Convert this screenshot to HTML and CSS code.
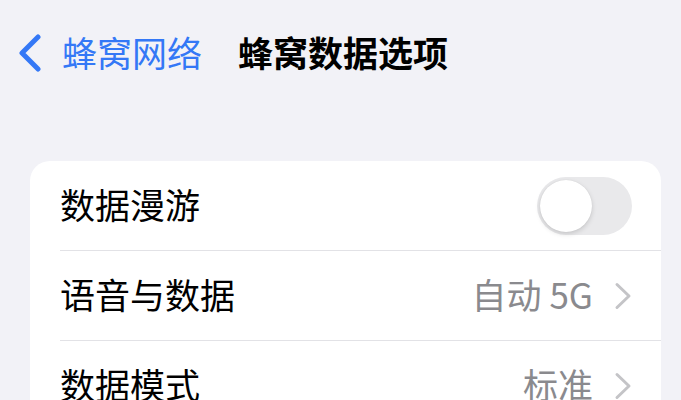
FILE: index.html
```html
<!DOCTYPE html>
<html lang="zh-CN">
<head>
<meta charset="utf-8">
<link rel="stylesheet" href="styles.css">
</head>
<body>
<div class="nav">
  <svg class="back" width="24" height="38" viewBox="0 0 24 38"><path d="M20 3 L4 19 L20 35" fill="none" stroke="#3478f6" stroke-width="5" stroke-linecap="round" stroke-linejoin="round"/></svg>
  <span class="back-text">蜂窝网络</span>
  <span class="title">蜂窝数据选项</span>
</div>
<div class="card">
  <div class="row">
    <span class="label">数据漫游</span>
    <div class="toggle"><div class="knob"></div></div>
  </div>
  <div class="row">
    <span class="label">语音与数据</span>
    <div class="value"><span class="value-text">自动 5G</span><svg width="18" height="28" viewBox="0 0 18 28"><path d="M3 2.5 L15 14 L3 25.5" fill="none" stroke="#c4c4c7" stroke-width="3" stroke-linecap="round" stroke-linejoin="round"/></svg></div>
  </div>
  <div class="row">
    <span class="label">数据模式</span>
    <div class="value"><span class="value-text">标准</span><svg width="18" height="28" viewBox="0 0 18 28"><path d="M3 2.5 L15 14 L3 25.5" fill="none" stroke="#c4c4c7" stroke-width="3" stroke-linecap="round" stroke-linejoin="round"/></svg></div>
  </div>
</div>
</body>
</html>
```
FILE: styles.css
```css
html, body {
  margin: 0;
  padding: 0;
  background: #f2f2f7;
  font-family: "Noto Sans CJK SC", "Noto Sans", sans-serif;
  overflow: hidden;
}
.nav {
  height: 106px;
  display: flex;
  align-items: center;
  padding-left: 18px;
}
.back {
  flex: none;
}
.back-text {
  margin-left: 20px;
  font-size: 35px;
  line-height: 40px;
  padding-bottom: 3px;
  color: #3478f6;
}
.title {
  margin-left: 36px;
  font-size: 35px;
  line-height: 40px;
  padding-bottom: 3px;
  font-weight: 700;
  color: #000;
}
.card {
  margin: 55px 20px 0 30px;
  background: #fff;
  border-radius: 20px;
  overflow: hidden;
}
.row {
  margin-left: 30px;
  padding-right: 29px;
  height: 89px;
  border-bottom: 1px solid #e2e2e6;
  display: flex;
  align-items: center;
  justify-content: space-between;
}
.label {
  font-size: 35px;
  line-height: 40px;
  padding-bottom: 4px;
  color: #000;
}
.toggle {
  width: 95px;
  height: 58px;
  border-radius: 29px;
  background: #e9e9eb;
  position: relative;
}
.knob {
  position: absolute;
  left: 3px;
  top: 3px;
  width: 52px;
  height: 52px;
  border-radius: 50%;
  background: #fff;
  box-shadow: 0 2px 5px rgba(0,0,0,0.15), 0 0 1px rgba(0,0,0,0.1);
}
.value {
  display: flex;
  align-items: center;
  gap: 21px;
  color: #8a8a8e;
}
.value-text {
  font-size: 35px;
  line-height: 40px;
  padding-bottom: 4px;
}
.value svg {
  flex: none;
}
```
